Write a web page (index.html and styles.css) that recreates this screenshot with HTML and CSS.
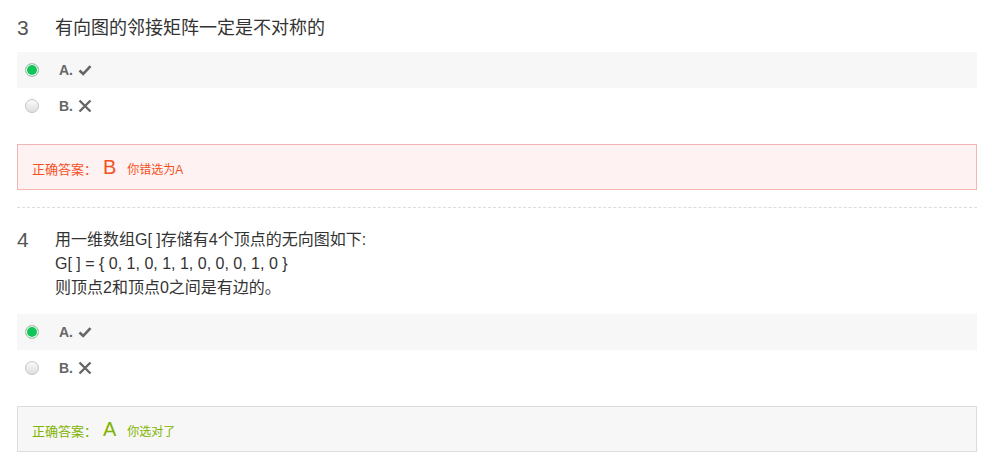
FILE: index.html
```html
<!DOCTYPE html>
<html lang="zh-CN">

<head>
    <meta charset="UTF-8">
    <meta name="viewport" content="width=device-width, initial-scale=1.0">
    <title>判断题</title>
    <link rel="stylesheet" href="styles.css">
</head>

<body>
    <div class="paper">
        <!-- 第3题 -->
        <div class="question">
            <div class="q-title">
                <span class="q-num">3</span>
                <div class="q-text big">有向图的邻接矩阵一定是不对称的</div>
            </div>
            <ul class="options">
                <li class="option checked">
                    <span class="radio"></span>
                    <span class="opt-label">A.</span>
                    <svg class="opt-icon" viewBox="0 0 14 14" width="14" height="14">
                        <path d="M1.5 7.5 L5.2 11 L12.5 3.2" fill="none" stroke="#666" stroke-width="2.6" />
                    </svg>
                </li>
                <li class="option">
                    <span class="radio"></span>
                    <span class="opt-label">B.</span>
                    <svg class="opt-icon" viewBox="0 0 14 14" width="14" height="14">
                        <path d="M1.5 1.5 L12.5 12.5 M12.5 1.5 L1.5 12.5" fill="none" stroke="#666" stroke-width="2.4" />
                    </svg>
                </li>
            </ul>
            <div class="answer wrong">
                <span class="ans-title">正确答案：</span>
                <span class="ans-key">B</span>
                <span class="ans-note">你错选为A</span>
            </div>
        </div>

        <!-- 第4题 -->
        <div class="question">
            <div class="q-title">
                <span class="q-num">4</span>
                <div class="q-text">
                    用一维数组G[ ]存储有4个顶点的无向图如下:<br>
                    G[ ] = { 0, 1, 0, 1, 1, 0, 0, 0, 1, 0 }<br>
                    则顶点2和顶点0之间是有边的。
                </div>
            </div>
            <ul class="options">
                <li class="option checked">
                    <span class="radio"></span>
                    <span class="opt-label">A.</span>
                    <svg class="opt-icon" viewBox="0 0 14 14" width="14" height="14">
                        <path d="M1.5 7.5 L5.2 11 L12.5 3.2" fill="none" stroke="#666" stroke-width="2.6" />
                    </svg>
                </li>
                <li class="option">
                    <span class="radio"></span>
                    <span class="opt-label">B.</span>
                    <svg class="opt-icon" viewBox="0 0 14 14" width="14" height="14">
                        <path d="M1.5 1.5 L12.5 12.5 M12.5 1.5 L1.5 12.5" fill="none" stroke="#666" stroke-width="2.4" />
                    </svg>
                </li>
            </ul>
            <div class="answer right">
                <span class="ans-title">正确答案：</span>
                <span class="ans-key">A</span>
                <span class="ans-note">你选对了</span>
            </div>
        </div>
    </div>
</body>

</html>
```

FILE: styles.css
```css
body {
    margin: 0;
    background-color: #ffffff;
    font-family: 'Liberation Sans', 'Noto Sans CJK SC', sans-serif;
    color: #333;
}

.paper {
    padding: 0 19px 0 17px;
}

.question {
    padding: 20px 0 17px;
    border-bottom: 1px dashed #dcdcdc;
}

.question:first-child {
    padding-top: 16px;
}

.question:last-child {
    border-bottom: none;
}

.q-title {
    display: flex;
    align-items: flex-start;
}

.q-num {
    width: 38px;
    font-size: 21px;
    line-height: 24px;
    color: #555;
}

.q-text {
    font-size: 16px;
    line-height: 24px;
    color: #333;
}

.q-text.big {
    font-size: 18px;
}

.options {
    list-style: none;
    margin: 12px 0 20px;
    padding: 0;
}

.question + .question .options {
    margin-top: 14px;
}

.option {
    display: flex;
    align-items: center;
    height: 36px;
    padding-left: 8px;
}

.option.checked {
    background-color: #f7f7f7;
}

.radio {
    width: 12px;
    height: 12px;
    border-radius: 50%;
    border: 1px solid #c4c4c4;
    background: linear-gradient(#fafafa, #dedede);
    box-sizing: content-box;
}

.option.checked .radio {
    background: #12c55a;
    border-color: #bfbfbf;
    box-shadow: inset 0 0 0 1px #ffffff;
}

.opt-label {
    margin-left: 20px;
    font-size: 14px;
    font-weight: bold;
    color: #666;
}

.opt-icon {
    margin-left: 5px;
}

.answer {
    display: flex;
    align-items: baseline;
    height: 44px;
    line-height: 44px;
    padding-left: 14px;
    border: 1px solid #dcdcdc;
    background-color: #f7f7f7;
}

.answer.wrong {
    border-color: #f4b6b4;
    background-color: #fff2f2;
    color: #f4511e;
}

.answer.right {
    color: #7fb300;
}

.ans-title {
    font-size: 13px;
}

.ans-key {
    margin-left: 6px;
    font-size: 20px;
}

.ans-note {
    margin-left: 11px;
    font-size: 12px;
}
```
